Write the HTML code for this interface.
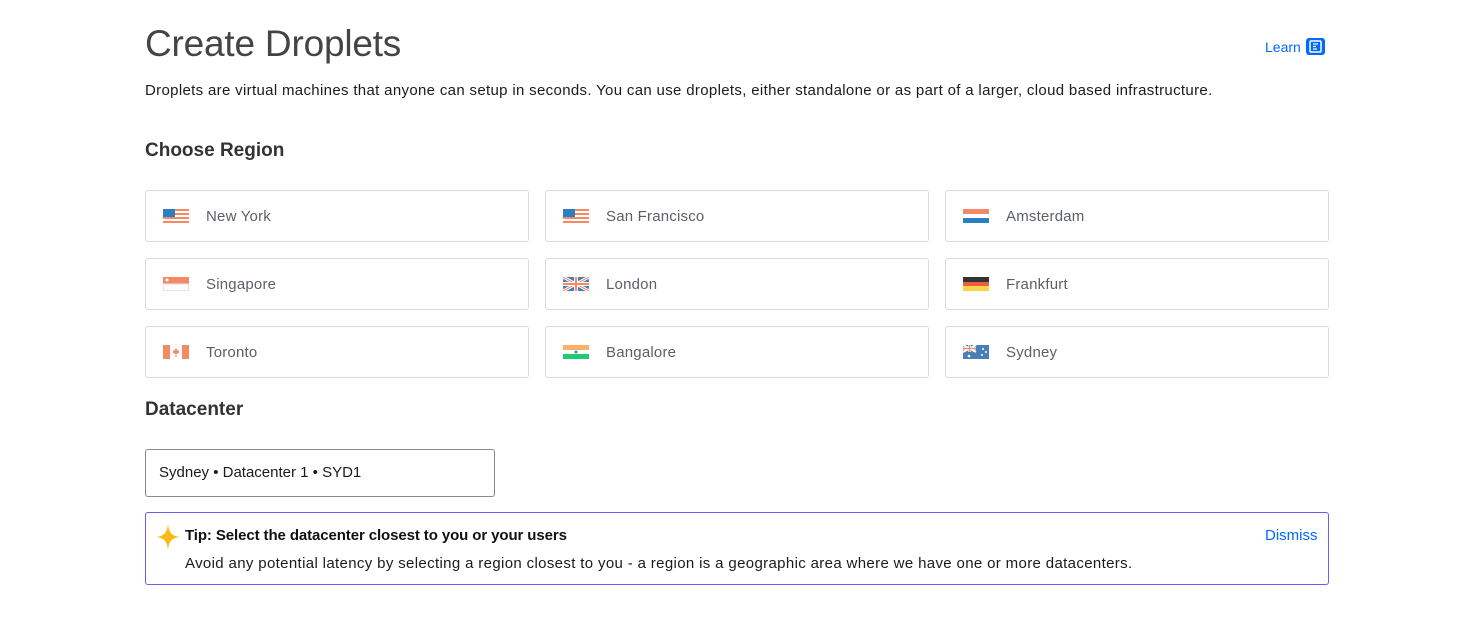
<!DOCTYPE html>
<html><head><style>
*{box-sizing:border-box;margin:0;padding:0}
body{width:1472px;height:617px;background:#fff;font-family:"Liberation Sans",sans-serif;color:#1b1b1b;position:relative;overflow:hidden}
.abs{position:absolute}
h1{position:absolute;left:145px;top:23px;font-size:37px;font-weight:300;color:#444;letter-spacing:-0.2px}
.learn{position:absolute;left:1265px;top:38px;font-size:14px;color:#0069ff;display:flex;align-items:center;gap:5px}
.desc{position:absolute;left:145px;top:82px;font-size:15px;color:#1b1b1b;letter-spacing:0.33px}
.h2{position:absolute;left:145px;font-size:19px;font-weight:bold;color:#333}
.card{position:absolute;width:384px;height:52px;border:1px solid #dcdcdc;border-radius:3px;display:flex;align-items:center;font-size:15px;color:#5b5f66;letter-spacing:0.2px}
.card svg{margin-left:17px;margin-right:17px}
.input{position:absolute;left:145px;top:449px;width:350px;height:48px;border:1px solid #8a8a8a;border-radius:3px;font-size:15px;padding-left:13px;line-height:46px;color:#1b1b1b}
.tip{position:absolute;left:145px;top:512px;width:1184px;height:73px;border:1px solid #6a5cf0;border-radius:3px}
</style></head><body>
<h1>Create Droplets</h1>
<div class="learn">Learn <svg width="19" height="17" viewBox="0 0 19 17"><rect x="0" y="0" width="19" height="17" rx="3" fill="#0069ff"/><rect x="4" y="3" width="11" height="11" rx="1" fill="none" stroke="#fff" stroke-width="1.5"/><path d="M7 6h5M7 8.5h3M7 11h4" stroke="#fff" stroke-width="1.3"/></svg></div>
<div class="desc">Droplets are virtual machines that anyone can setup in seconds. You can use droplets, either standalone or as part of a larger, cloud based infrastructure.</div>
<div class="h2" style="top:140px">Choose Region</div>

<div class="card" style="left:145px;top:190px"><svg width="26" height="14"><rect width="26" height="14" fill="#fff"/><rect y="0" width="26" height="2" fill="#f58966"/><rect y="4" width="26" height="2" fill="#f58966"/><rect y="8" width="26" height="2" fill="#f58966"/><rect y="12" width="26" height="2" fill="#f58966"/><rect width="12" height="8" fill="#2b7fc0"/></svg>New York</div>
<div class="card" style="left:545px;top:190px"><svg width="26" height="14"><rect width="26" height="14" fill="#fff"/><rect y="0" width="26" height="2" fill="#f58966"/><rect y="4" width="26" height="2" fill="#f58966"/><rect y="8" width="26" height="2" fill="#f58966"/><rect y="12" width="26" height="2" fill="#f58966"/><rect width="12" height="8" fill="#2b7fc0"/></svg>San Francisco</div>
<div class="card" style="left:945px;top:190px"><svg width="26" height="14"><rect width="26" height="5" fill="#f58966"/><rect y="5" width="26" height="4" fill="#fff"/><rect y="9" width="26" height="5" fill="#2b7fc0"/></svg>Amsterdam</div>
<div class="card" style="left:145px;top:258px"><svg width="26" height="14"><rect width="26" height="7" fill="#f58966"/><rect x="0.5" y="7" width="25" height="6.5" fill="#fff" stroke="#e5e5e5"/><circle cx="4" cy="3" r="1.5" fill="#fff"/></svg>Singapore</div>
<div class="card" style="left:545px;top:258px"><svg width="26" height="14"><rect width="26" height="14" fill="#4a7fb5"/><path d="M0 0L26 14M26 0L0 14" stroke="#fff" stroke-width="3"/><path d="M0 0L26 14M26 0L0 14" stroke="#f58966" stroke-width="1"/><path d="M13 0v14M0 7h26" stroke="#fff" stroke-width="4"/><path d="M13 0v14M0 7h26" stroke="#f58966" stroke-width="2"/></svg>London</div>
<div class="card" style="left:945px;top:258px"><svg width="26" height="14"><rect width="26" height="5" fill="#333"/><rect y="5" width="26" height="4" fill="#f05a4b"/><rect y="9" width="26" height="5" fill="#f7d548"/></svg>Frankfurt</div>
<div class="card" style="left:145px;top:326px"><svg width="26" height="14"><rect width="26" height="14" fill="#fff"/><rect width="7" height="14" fill="#f58966"/><rect x="19" width="7" height="14" fill="#f58966"/><path d="M13 3l2 3 1-1 0 3-3 1-3-1 0-3 1 1z" fill="#f58966"/><rect x="12.5" y="9" width="1" height="3" fill="#f58966"/></svg>Toronto</div>
<div class="card" style="left:545px;top:326px"><svg width="26" height="14"><rect width="26" height="5" fill="#f7b267"/><rect y="5" width="26" height="4" fill="#fff"/><rect y="9" width="26" height="5" fill="#1ecb72"/><circle cx="13" cy="7" r="1.5" fill="#4a7fb5"/></svg>Bangalore</div>
<div class="card" style="left:945px;top:326px"><svg width="26" height="14"><rect width="26" height="14" fill="#4a7fb5"/><path d="M0 0L13 7M13 0L0 7" stroke="#fff" stroke-width="2"/><path d="M6.5 0v7M0 3.5h13" stroke="#fff" stroke-width="2.5"/><path d="M6.5 0v7M0 3.5h13" stroke="#f58966" stroke-width="1.2"/><circle cx="20" cy="4" r="1" fill="#fff"/><circle cx="23" cy="7" r="1" fill="#fff"/><circle cx="19" cy="10" r="1" fill="#fff"/><circle cx="6" cy="11" r="1.3" fill="#fff"/></svg>Sydney</div>

<div class="h2" style="top:399px">Datacenter</div>
<div class="input">Sydney • Datacenter 1 • SYD1</div>
<div class="tip">
<svg class="abs" style="left:10px;top:11px" width="24" height="26" viewBox="0 0 24 26"><path d="M12 0C13 8 15 12 24 13C15 14 13 18 12 26C11 18 9 14 0 13C9 12 11 8 12 0Z" fill="#fbb917"/></svg>
<div class="abs" style="left:39px;top:14px;font-size:15px;font-weight:bold;color:#111;letter-spacing:-0.1px">Tip: Select the datacenter closest to you or your users</div>
<div class="abs" style="left:39px;top:42px;font-size:15px;color:#1b1b1b;letter-spacing:0.35px">Avoid any potential latency by selecting a region closest to you - a region is a geographic area where we have one or more datacenters.</div>
<div class="abs" style="left:1119px;top:14px;font-size:15px;color:#0069ff">Dismiss</div>
</div>
</body></html>
